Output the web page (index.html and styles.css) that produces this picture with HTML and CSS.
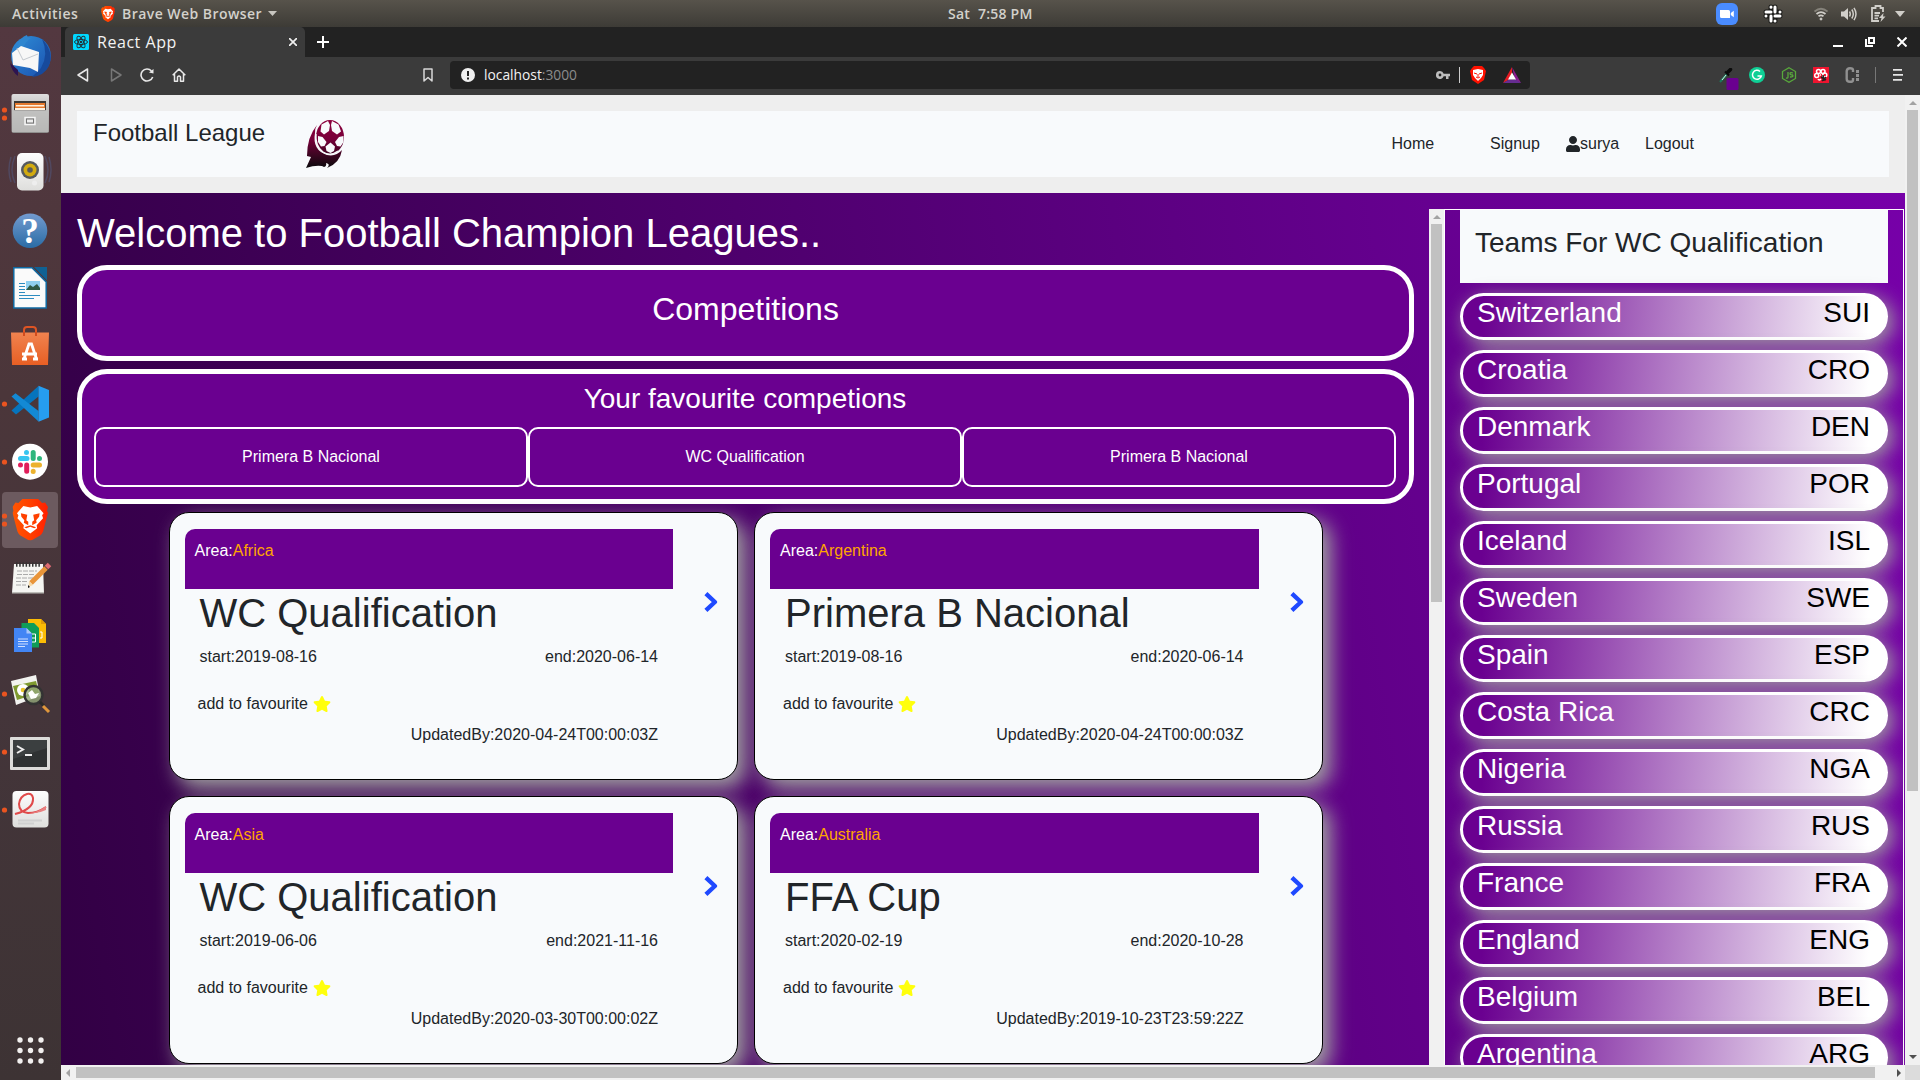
FILE: index.html
```html
<!DOCTYPE html>
<html lang="en">
<head>
<meta charset="utf-8">
<title>React App</title>
<link rel="stylesheet" href="styles.css">
</head>
<body>
<svg class="defs" aria-hidden="true">
  <defs>
    <linearGradient id="brave-g" x1="0" x2="1" y1="0" y2="0"><stop offset="0" stop-color="#ff5601"/><stop offset=".5" stop-color="#ff4000"/><stop offset="1" stop-color="#ff1f01"/></linearGradient>
    <linearGradient id="metal" x1="0" x2="0" y1="0" y2="1"><stop offset="0" stop-color="#dedede"/><stop offset="1" stop-color="#8e8e8c"/></linearGradient>
    <linearGradient id="paper" x1="0" x2="0" y1="0" y2="1"><stop offset="0" stop-color="#fdfdfd"/><stop offset="1" stop-color="#dededc"/></linearGradient>
    <linearGradient id="help-g" x1="0" x2="0" y1="0" y2="1"><stop offset="0" stop-color="#739bd0"/><stop offset="1" stop-color="#2a6ca5"/></linearGradient>
    <linearGradient id="bag-g" x1="0" x2="0" y1="0" y2="1"><stop offset="0" stop-color="#f0834f"/><stop offset="1" stop-color="#e85f24"/></linearGradient>
    <linearGradient id="bird-g" x1="0" x2="1" y1="0" y2="1"><stop offset="0" stop-color="#2f8fd8"/><stop offset="1" stop-color="#1a4fae"/></linearGradient>
    <linearGradient id="ball-g" gradientUnits="userSpaceOnUse" x1="0" x2="0" y1="0" y2="48"><stop offset="0" stop-color="#8c003c"/><stop offset=".4" stop-color="#78003a"/><stop offset="1" stop-color="#0a0a0c"/></linearGradient>
    <symbol id="lion" viewBox="0 0 36 42">
      <path fill="url(#brave-g)" d="M10 0h16l4 4 3-.5L36 8l-1 4 1 2-5 19q-1 2.500-3 4l-8 4.500q-2 1-4 0l-8-4.500q-2-1.500-3-4L0 14l1-2-1-4 3-4.500 3 .5z"/>
      <path fill="#fff" d="M11 7l7 1.500L25 7l6.500 7.500-1.500 2 1 3-6.500 7 .5 3-7 5.500-7-5.500.5-3L5 19.500l1-3-1.500-2z"/>
      <path fill="#ff4000" d="M8.500 14.500l6.500 1.500-1 5.500 2 1.500v3.500L11.500 24l.5-2.500-3-3.500zM27.500 14.500L21 16l1 5.500-2 1.500v3.500l4.500-2.500-.5-2.500 3-3.500zM12 28.500l6-2 6 2-2 1-4-1.500-4 1.500z"/>
    </symbol>
    <symbol id="star" viewBox="0 0 576 512"><path fill="#ffff0c" d="M259.300 17.800L194 150.200 47.900 171.500c-26.200 3.800-36.700 36.100-17.700 54.600l105.700 103-25 145.500c-4.500 26.300 23.200 46 46.400 33.700L288 439.600l130.700 68.700c23.200 12.200 50.900-7.400 46.400-33.700l-25-145.500 105.700-103c19-18.500 8.500-50.800-17.700-54.600L382 150.200 316.700 17.800c-11.700-23.600-45.600-23.900-57.400 0z"/></symbol>
    <symbol id="chevron" viewBox="0 0 14 20"><path fill="none" stroke="#1f49ff" stroke-width="4.400" stroke-linejoin="round" d="M1.900 1.700L10.900 10l-9 8.300"/></symbol>
  </defs>
</svg>

<header class="topbar">
  <span class="activities">Activities</span>
  <svg class="app-logo" width="14" height="16"><use href="#lion"/></svg>
  <span class="app-name">Brave Web Browser</span>
  <svg class="app-arrow" width="9" height="5" viewBox="0 0 9 5"><path fill="#c8c6c0" d="M0 0h9L4.500 5z"/></svg>
  <span class="clock">Sat&nbsp; 7:58 PM</span>
  <div class="tray">
    <svg width="22" height="22" viewBox="0 0 22 22"><rect width="22" height="22" rx="6" fill="#4a8cff"/><path fill="#fff" d="M4 7h8.500q1.500 0 1.500 1.500V15H5.500Q4 15 4 13.500zM14.800 10l3-2.200v6.400l-3-2.200z"/></svg>
    <svg class="tray-slack" width="20" height="20" viewBox="0 0 20 20"><g stroke="#1c1c1a" stroke-width="5" stroke-linecap="round"><path d="M8 3v5M3 8h5M12 12v5M12 12h5M12 3v5M3 12h5M8 12v5M12 8h5"/></g><g stroke="#fff" stroke-width="3" stroke-linecap="round"><path d="M3 8h5M12 3v5M12 12h5M8 12v5M8 3V3.200M3 12v.1M12 17v.1M17 8v.1"/></g></svg>
    <svg class="tray-wifi" width="14" height="14" viewBox="0 0 14 14" fill="none" stroke="#d0cec9" stroke-width="1.700"><path stroke="#85827a" d="M.5 4.500Q7-1 13.500 4.500"/><path d="M2.500 7Q7 3.200 11.500 7M4.500 9.300Q7 7.500 9.500 9.300"/><circle cx="7" cy="12" r="1" fill="#d0cec9" stroke-width="1"/></svg>
    <svg class="tray-vol" width="16" height="14" viewBox="0 0 16 14"><path fill="#d0cec9" d="M0 4.500h3L7 1v12L3 9.500H0z"/><path fill="none" stroke="#d0cec9" stroke-width="1.500" d="M8.500 4.500q1.500 2.500 0 5M10.800 2.500q3 4.500 0 9M13 .8q4 6.200 0 12.400"/></svg>
    <svg class="tray-bat" width="15" height="17" viewBox="0 0 15 17"><path fill="none" stroke="#d0cec9" stroke-width="1.800" d="M12 7V3H9.500V1h-5v2H1v13h7M3.500 8H9M3.500 10.700H8M3.500 13.300H7"/><path fill="#d0cec9" d="M12.500 8L8 13h2.500L9.500 17l5-5.500H12z"/></svg>
    <svg class="tray-arrow" width="10" height="6" viewBox="0 0 10 6"><path fill="#d0cec9" d="M0 0h10L5 6z"/></svg>
  </div>
</header>

<div class="desktop">
<aside class="dock">
  <svg viewBox="0 0 61 58"><circle cx="31" cy="29" r="20" fill="url(#bird-g)"/><path fill="#174a9c" d="M42 12q12 12 7 27-5 10-17 11l9-9q8-14 1-29z"/><path fill="#2e86d0" d="M17 20Q20 10 27 8q0 3 4 3-6 4-9 12z"/><path fill="#2d1450" d="M10 36l8 7v6q-6-4-8-13z"/><path fill="#f7f7f7" d="M12 26l9-7 18 6-1 20-8-4-17-3z"/><path fill="none" stroke="#c4c9cf" d="M17 21l6 12 15-6"/></svg>
  <svg viewBox="0 0 61 58"><circle class="pip" cx="4.500" cy="25" r="2.600"/><circle class="pip" cx="4.500" cy="33" r="2.600"/><rect x="11.500" y="9" width="37.500" height="39" rx="2" fill="url(#metal)"/><rect x="14" y="16" width="32" height="10" fill="#403a35"/><path fill="#e67a2e" d="M15 18h30v7H15z"/><path fill="#fff1df" d="M16 20h28v1.500H16zM15 23h30v2H15z"/><path fill="#c2c2c1" d="M12 25h36.500v22H12z" opacity=".8"/><rect x="25" y="32.500" width="10" height="7" fill="none" stroke="#f5f5f5" stroke-width="1.500"/><rect x="26.500" y="34" width="7" height="4" fill="#eee" stroke="#777"/></svg>
  <svg viewBox="0 0 61 58"><g fill="none" stroke="#52587c" stroke-width="1.500" opacity=".55"><path d="M15 13q-6 14 0 27M11 14q-4 13 0 25M45 13q6 14 0 27M49 14q4 13 0 25"/></g><rect x="17" y="10" width="26.500" height="37.500" rx="5" fill="url(#paper)"/><circle cx="30" cy="27" r="9" fill="#555a60"/><circle cx="30" cy="27" r="6.500" fill="#d2ab10"/><circle cx="30" cy="27" r="2.800" fill="#5b5b56"/><circle cx="34.500" cy="40" r="2.500" fill="#eee"/></svg>
  <svg viewBox="0 0 61 58"><circle cx="30" cy="29.700" r="17.300" fill="url(#help-g)"/><text x="30" y="41.500" class="help-mark">?</text></svg>
  <svg viewBox="0 0 61 58"><path fill="#fafafa" stroke="#0f6aa3" stroke-width="1.500" d="M13.800 8.800H32L46.200 23v26H13.800z"/><path fill="#0f6194" d="M34 8h13v13.500z"/><path stroke="#2c8cc0" d="M19 24.500h6M19 27.500h6M19 30.500h6M19 33.500h6M19 36.500h21M19 39.500h15"/><path fill="#8fd0f0" d="M26 22h14v9H26z"/><path fill="#2f5a46" d="M26 31l4-5 3 2 4-3 3 4v2z"/></svg>
  <svg viewBox="0 0 61 58"><path fill="none" stroke="#dd5424" stroke-width="2" d="M24 20v-7q0-3 3-3h6q3 0 3 3v7"/><path fill="url(#bag-g)" d="M11 15.500h38L48 48H12z"/><path fill="none" stroke="#d14b1d" stroke-width="2" d="M24 15v4M36 15v4"/><path fill="none" stroke="#fff" stroke-width="2.800" d="M24 42l5-15h2.500l5 15M22 37h15M22 42h5M33 42h5"/></svg>
  <svg viewBox="0 0 61 58"><circle class="pip" cx="4.500" cy="29" r="2.600"/><path fill="#0674bd" d="M38.500 11v10.500L16 39.500l-4.500-4z"/><path fill="#1389d4" d="M11.500 21.500l4-3.200 23 17.800V46.500z"/><path fill="#269df0" d="M38.500 10.700L49 15v27.500l-10.500 4.200z"/></svg>
  <svg viewBox="0 0 61 58"><circle class="pip" cx="4.500" cy="29" r="2.600"/><circle cx="30" cy="28.700" r="18" fill="#fff"/><g stroke-width="5" stroke-linecap="round"><path stroke="#36c5f0" d="M20.500 25.500H27M26.500 19.500v.1"/><path stroke="#2eb67d" d="M33.200 19.500v6M39.500 25.500v.1"/><path stroke="#ecb22e" d="M33.200 32H39.500M33.200 38.300v.1"/><path stroke="#e01e5a" d="M26.700 32v6.300M20.500 32v.1"/></g></svg>
  <svg viewBox="0 0 61 58"><rect x="2" y="1" width="56" height="56" rx="4" fill="#6c5a5f"/><circle class="pip" cx="4.500" cy="25" r="2.600"/><circle class="pip" cx="4.500" cy="33" r="2.600"/><use href="#lion" x="12.500" y="8" width="35.500" height="41.500"/></svg>
  <svg viewBox="0 0 61 58"><path fill="#f5f5f2" d="M14 15h29l1 29H12z"/><path fill="#bdbdb8" d="M12 43h32v1.500H12z"/><path stroke="#333" stroke-width="4.500" stroke-dasharray="1.500 1.700" d="M16 15.500h24"/><path stroke="#aaa" stroke-dasharray="5 1" d="M17 22h20M17 25.500h18M16 29h18M16 32.500h12M16 36h10"/><path stroke="#e9953a" stroke-width="5" d="M31 34l15-15"/><path stroke="#e06a72" stroke-width="5" d="M46.500 18.500l3-3"/><path fill="#f5d9a8" d="M29 32l4 4-4.500 2z"/><path fill="#111" d="M28 36l2 2-2 1z"/></svg>
  <svg viewBox="0 0 61 58"><path fill="#fbbc05" d="M28 12h13l5 5v19H28z"/><path fill="#e09b06" d="M41 12l5 5h-5z"/><path fill="#0f9d58" d="M21.500 16H34l5 5v19.500H21.500z"/><path fill="none" stroke="#fff" d="M32 27h3.500v8H32M32 31h3.500M40 25h2v6h-2"/><path fill="#4285f4" d="M14 21h12.500l5.500 5.500V45H14z"/><path fill="#a9c7fa" d="M26.500 21l5.500 5.500h-5.500z"/><path stroke="#cfe0ff" stroke-width="1.200" d="M18 32h10M18 34.500h10M18 37h10M18 39.500h7"/></svg>
  <svg viewBox="0 0 61 58"><circle class="pip" cx="4.500" cy="29" r="2.600"/><path fill="#f3f3f0" d="M11 16l25-6 4 21-24 9z"/><path fill="#7f9a2f" d="M13 21l23-5 3 12-22 7z"/><circle cx="23" cy="25" r="6" fill="#fff"/><circle cx="23" cy="25" r="2.300" fill="#e8c42c"/><circle cx="33.500" cy="30" r="9" fill="#93a77a" fill-opacity=".8" stroke="#333" stroke-width="2.500"/><path fill="#fff" d="M28 28l4-3 3 4 4-1-3 5-5 1z"/><path stroke="#2a2a2a" stroke-width="3" d="M40 37l4 4"/><path stroke="#e0973c" stroke-width="3" d="M43 41l6 6"/></svg>
  <svg viewBox="0 0 61 58"><circle class="pip" cx="4.500" cy="29" r="2.600"/><rect x="10" y="14" width="40" height="33" rx="1" fill="#dcdcda"/><rect x="13" y="17" width="34" height="27" fill="#2f3233"/><path fill="#44484a" d="M13 17h34v8L13 36z" opacity=".6"/><path fill="none" stroke="#eee" stroke-width="2" d="M17 23l6 3.500-6 3.500M25 32h7"/></svg>
  <svg viewBox="0 0 61 58"><circle class="pip" cx="4.500" cy="29" r="2.600"/><rect x="12.500" y="10" width="36" height="36.500" rx="4" fill="url(#paper)"/><path fill="none" stroke="#e04a4a" stroke-width="2" d="M15 33Q34 28 33 17q-1-5-6-4-7 2-8 10 0 8 9 9 9 0 18-6"/><path fill="#e88080" d="M30 32q8-1 16-7v4q-8 4-16 3z"/><path stroke="#d0d0d0" stroke-width="2" d="M18 39.500h24M18 42.500h16"/></svg>
  <svg class="apps" width="27" height="27" viewBox="0 0 27 27" fill="#f2f0ef"><circle cx="3" cy="3" r="2.700"/><circle cx="13.500" cy="3" r="2.700"/><circle cx="24" cy="3" r="2.700"/><circle cx="3" cy="13.500" r="2.700"/><circle cx="13.500" cy="13.500" r="2.700"/><circle cx="24" cy="13.500" r="2.700"/><circle cx="3" cy="24" r="2.700"/><circle cx="13.500" cy="24" r="2.700"/><circle cx="24" cy="24" r="2.700"/></svg>
</aside>

<div class="browser">
  <div class="tabstrip">
    <div class="tab">
      <svg width="16" height="16" viewBox="0 0 16 16"><rect width="16" height="16" rx="1.500" fill="#00d8ff"/><g fill="none" stroke="#20323a"><ellipse cx="8" cy="8" rx="6.500" ry="2.500"/><ellipse cx="8" cy="8" rx="6.500" ry="2.500" transform="rotate(60 8 8)"/><ellipse cx="8" cy="8" rx="6.500" ry="2.500" transform="rotate(120 8 8)"/></g><circle cx="8" cy="8" r="1.300" fill="#20323a"/></svg>
      <span class="tab-title">React App</span>
      <svg class="tab-close" width="8" height="8" viewBox="0 0 8 8" stroke="#f0f0f0" stroke-width="1.700"><path d="M0 0l8 8M8 0L0 8"/></svg>
    </div>
    <svg class="tab-new" width="12" height="12" viewBox="0 0 12 12" stroke="#fff" stroke-width="2"><path d="M6 0v12M0 6h12"/></svg>
    <div class="win-buttons">
      <svg width="10" height="10" viewBox="0 0 10 10"><path fill="#fff" d="M0 8h10v2H0z"/></svg>
      <svg width="10" height="10" viewBox="0 0 10 10" fill="none" stroke="#fff" stroke-width="2"><path d="M4 1h5v5H4zM1 2v7h7"/></svg>
      <svg width="10" height="10" viewBox="0 0 10 10" stroke="#fff" stroke-width="2"><path d="M.5.5l9 9M9.500.5l-9 9"/></svg>
    </div>
  </div>

  <div class="toolbar">
    <svg class="ic-back" width="12" height="14" viewBox="0 0 12 14" fill="none" stroke="#e8e8e8" stroke-width="1.500" stroke-linejoin="round"><path d="M10.500 1v12L1 7z"/></svg>
    <svg class="ic-fwd" width="12" height="14" viewBox="0 0 12 14" fill="none" stroke="#777" stroke-width="1.500" stroke-linejoin="round"><path d="M1.500 1v12L11 7z"/></svg>
    <svg class="ic-reload" width="14" height="14" viewBox="0 0 14 14" fill="none" stroke="#e8e8e8" stroke-width="1.600"><path d="M11.500 3A6 6 0 1 0 12.700 9"/><path fill="#e8e8e8" stroke="none" d="M9 4.500L13.500 1v4.500z"/></svg>
    <svg class="ic-home" width="14" height="14" viewBox="0 0 14 14" fill="none" stroke="#e8e8e8" stroke-width="1.500" stroke-linejoin="round"><path d="M.7 7.300L7 1l6.300 6.300M2.500 6v7.200h3V9q1.500-2 3 0v4.200h3V6"/></svg>
    <svg class="ic-mark" width="10" height="14" viewBox="0 0 10 14" fill="none" stroke="#d8d8d8" stroke-width="1.500" stroke-linejoin="round"><path d="M1 1h8v12L5 9.500 1 13z"/></svg>
    <div class="urlbar">
      <svg width="14" height="14" viewBox="0 0 14 14"><circle cx="7" cy="7" r="7" fill="#efefef"/><path fill="#222" d="M6 3h2v5H6zM6 9.500h2v2H6z"/></svg>
      <span class="url">localhost<span class="port">:3000</span></span>
      <svg class="ic-key" width="14" height="8" viewBox="0 0 14 8"><path fill="#bdbdbd" fill-rule="evenodd" d="M4 0a4 4 0 1 0 3.700 5.300H10V8h2.500V5.300H14V2.700H7.700A4 4 0 0 0 4 0zm0 2.600a1.400 1.400 0 1 1 0 2.800 1.400 1.400 0 0 1 0-2.800z"/></svg>
      <span class="url-sep"></span>
      <svg class="ic-shield" width="16" height="18" viewBox="0 0 16 18"><path fill="#f10" d="M4 0h8l2 2 2 3-2 9-6 4-6-4L0 5l2-3z"/><path fill="#fff" d="M3 4l5-1 5 1v5l-2 3-3 3-3-3-2-3z"/><path stroke="#f10" fill="none" d="M4 7l3 1M12 7L9 8M8 8v3M6 11l2 1 2-1"/></svg>
      <svg class="ic-bat" width="18" height="16" viewBox="0 0 18 16"><path fill="#e51b23" d="M9 0L0 16l9-5z"/><path fill="#8a1b8f" d="M9 0l9 16-6-3z"/><path fill="#662d91" d="M0 16h18l-5-3.500H6z"/><path fill="#fff" d="M9 5.500l4 7H5z"/></svg>
    </div>
    <div class="extensions">
      <svg width="20" height="22" viewBox="0 0 20 22"><path stroke="#1b7a5c" stroke-width="2" d="M1 14l7-8"/><path stroke="#d8f5e8" d="M3 12l4-5"/><path stroke="#0b0b0b" stroke-width="3.500" stroke-linecap="round" d="M9 4l2.500-2.500"/><path stroke="#0b0b0b" stroke-width="2" d="M6 3.500l4 4"/><rect x="7.500" y="10" width="12" height="12" rx="1.500" fill="#6a0090"/></svg>
      <svg class="ext-g" width="16" height="16" viewBox="0 0 16 16"><circle cx="8" cy="8" r="8" fill="#0fcf95"/><path fill="none" stroke="#fff" stroke-width="1.500" d="M11 4.500A4.500 4.500 0 1 0 12.300 9H8.500"/></svg>
      <svg class="ext-n" width="16" height="16" viewBox="0 0 16 16" fill="none" stroke="#58a83c" stroke-width="1.300"><path d="M8 .7l6.500 3.800v7L8 15.300 1.500 11.500v-7zM7 5v5q0 1.500-2 1M12 6q-3-1-3 .5T11.500 8q1.500 2-2.500 2"/></svg>
      <svg class="ext-r" width="16" height="16" viewBox="0 0 16 16"><rect width="16" height="16" fill="#f0142f"/><g fill="none" stroke="#fff" stroke-width="1.500"><circle cx="5.500" cy="4.500" r="2"/><circle cx="10" cy="4.500" r="2"/><circle cx="3.700" cy="8.500" r="2"/><circle cx="11.800" cy="8" r="2"/><path d="M5 12q1 2 3 0M7 8h1"/></g><path stroke="#222" stroke-width="1.500" d="M8 10l5 3M10 8l1 6M13 10l-4 4"/></svg>
      <svg class="ext-c" width="15" height="16" viewBox="0 0 15 16"><path fill="none" stroke="#909090" stroke-width="2.400" d="M8 5V3Q8 1.200 5 1.200T1.700 4v8q0 2.800 3.300 2.800T8 13v-2"/><path fill="#909090" d="M11 3h3v3h-3zM11 7h3v3h-3zM11 11h3v3h-3z"/></svg>
      <span class="ext-sep"></span>
      <svg class="ext-m" width="10" height="12" viewBox="0 0 10 12"><path fill="#e6e6e6" d="M0 0h9v1.800H0zM0 5h10v1.800H0zM0 10h9v1.800H0z"/></svg>
    </div>
  </div>

  <div class="viewport">
    <div class="page">
      <nav class="site-nav">
        <div class="nav-inner">
          <h1 class="brand">Football League</h1>
          <svg class="brand-logo" width="38" height="49" viewBox="0 0 38 49">
            <path fill="url(#ball-g)" d="M11 5Q1 17 1 36l4 1-5 11q9-3 16-2l2 1q3-1 2-4 5 1 1 5 13-5 15-18-6 7-15 5Q6 30 9 13q0-5 2-8z"/>
            <ellipse cx="24" cy="17" rx="14" ry="17" fill="url(#ball-g)"/>
            <g fill="#f8fafc"><path d="M15.500 4.500L22 1l2 4-1 6-5 3.500-3.500-3zM32.500 4.500L26 1l-1 4 1 6 5 3.500 4-3zM12 16l4.500 1 4 5-2 4-3.500.5-3-4.500zM37.500 16l-4.500 1-4 5 2 4 3.500.5 3-4.500zM24.500 22.500l4.500 4-1 4.500-3.500 2-4-2-1-4.500z"/></g>
            <path fill="none" stroke="#f8fafc" stroke-width="1.300" d="M10 14q-1 12 7 18 7 5 15-1"/>
          </svg>
          <a class="link-home">Home</a>
          <a class="link-signup">Signup</a>
          <a class="link-user"><svg width="14" height="16" viewBox="0 0 448 512"><path fill="#212529" d="M224 256c70.700 0 128-57.300 128-128S294.700 0 224 0 96 57.300 96 128s57.300 128 128 128zm89.600 32h-16.700c-22.200 10.200-46.900 16-72.900 16s-50.600-5.800-72.900-16h-16.700C60.200 288 0 348.200 0 422.400V464c0 26.500 21.500 48 48 48h352c26.500 0 48-21.500 48-48v-41.600c0-74.200-60.200-134.400-134.400-134.400z"/></svg>surya</a>
          <a class="link-logout">Logout</a>
        </div>
      </nav>

      <div class="columns">
        <main class="main">
          <h1 class="welcome">Welcome to Football Champion Leagues..</h1>
          <section class="banner">Competitions</section>
          <section class="favourites">
            <h3>Your favourite competions</h3>
            <div class="fav-row">
              <div class="fav">Primera B Nacional</div>
              <div class="fav">WC Qualification</div>
              <div class="fav">Primera B Nacional</div>
            </div>
          </section>
          <section class="cards">
            <article class="card">
              <div class="card-body">
                <div class="area">Area:<span>Africa</span></div>
                <h2>WC Qualification</h2>
                <div class="dates"><span>start:2019-08-16</span><span>end:2020-06-14</span></div>
                <div class="add">add to favourite <svg width="18" height="16"><use href="#star"/></svg></div>
                <div class="updated">UpdatedBy:2020-04-24T00:00:03Z</div>
              </div>
              <svg class="go" width="14" height="20"><use href="#chevron"/></svg>
            </article>
            <article class="card">
              <div class="card-body">
                <div class="area">Area:<span>Argentina</span></div>
                <h2>Primera B Nacional</h2>
                <div class="dates"><span>start:2019-08-16</span><span>end:2020-06-14</span></div>
                <div class="add">add to favourite <svg width="18" height="16"><use href="#star"/></svg></div>
                <div class="updated">UpdatedBy:2020-04-24T00:00:03Z</div>
              </div>
              <svg class="go" width="14" height="20"><use href="#chevron"/></svg>
            </article>
            <article class="card">
              <div class="card-body">
                <div class="area">Area:<span>Asia</span></div>
                <h2>WC Qualification</h2>
                <div class="dates"><span>start:2019-06-06</span><span>end:2021-11-16</span></div>
                <div class="add">add to favourite <svg width="18" height="16"><use href="#star"/></svg></div>
                <div class="updated">UpdatedBy:2020-03-30T00:00:02Z</div>
              </div>
              <svg class="go" width="14" height="20"><use href="#chevron"/></svg>
            </article>
            <article class="card">
              <div class="card-body">
                <div class="area">Area:<span>Australia</span></div>
                <h2>FFA Cup</h2>
                <div class="dates"><span>start:2020-02-19</span><span>end:2020-10-28</span></div>
                <div class="add">add to favourite <svg width="18" height="16"><use href="#star"/></svg></div>
                <div class="updated">UpdatedBy:2019-10-23T23:59:22Z</div>
              </div>
              <svg class="go" width="14" height="20"><use href="#chevron"/></svg>
            </article>
          </section>
        </main>

        <div class="vscroll inner"><i class="arrow up"></i><i class="thumb"></i></div>

        <aside class="teams">
          <h3>Teams For WC Qualification</h3>
          <div class="team"><span>Switzerland</span><b>SUI</b></div>
          <div class="team"><span>Croatia</span><b>CRO</b></div>
          <div class="team"><span>Denmark</span><b>DEN</b></div>
          <div class="team"><span>Portugal</span><b>POR</b></div>
          <div class="team"><span>Iceland</span><b>ISL</b></div>
          <div class="team"><span>Sweden</span><b>SWE</b></div>
          <div class="team"><span>Spain</span><b>ESP</b></div>
          <div class="team"><span>Costa Rica</span><b>CRC</b></div>
          <div class="team"><span>Nigeria</span><b>NGA</b></div>
          <div class="team"><span>Russia</span><b>RUS</b></div>
          <div class="team"><span>France</span><b>FRA</b></div>
          <div class="team"><span>England</span><b>ENG</b></div>
          <div class="team"><span>Belgium</span><b>BEL</b></div>
          <div class="team"><span>Argentina</span><b>ARG</b></div>
        </aside>
      </div>
    </div>
    <div class="vscroll outer"><i class="arrow up"></i><i class="thumb"></i><i class="arrow down"></i></div>
  </div>

  <div class="hscroll"><i class="arrow left"></i><i class="thumb"></i><i class="arrow right"></i><i class="corner"></i></div>
</div>
</div>
</body>
</html>
```
FILE: styles.css
```css
* { box-sizing: border-box; }
body { margin: 0; width: 1920px; height: 1080px; overflow: hidden; display: flex; flex-direction: column; font-family: "Liberation Sans", Arial, sans-serif; font-size: 16px; line-height: 24px; color: #212529; white-space: nowrap; }
h1, h2, h3 { margin: 0; font-weight: 400; line-height: 1.2; }
svg { display: block; flex: none; }
.defs { position: absolute; width: 0; height: 0; }

/* desktop top bar */
.topbar { height: 27px; flex: none; display: flex; align-items: center; background: linear-gradient(#57534b, #3d3b36); color: #d3d1cb; font: 600 14px/27px "Open Sans", "Noto Sans", sans-serif; }
.activities { margin-left: 12px; width: 89px; letter-spacing: .5px; }
.app-name { margin-left: 7px; width: 146px; letter-spacing: .45px; }
.clock { margin-left: 671px; letter-spacing: .25px; }
.tray { margin-left: auto; margin-right: 15px; display: flex; align-items: center; }
.tray-slack { margin-left: 25px; }
.tray-wifi { margin-left: 31px; }
.tray-vol { margin-left: 13px; }
.tray-bat { margin-left: 14px; }
.tray-arrow { margin-left: 9px; }

.desktop { flex: 1; min-height: 0; display: flex; }
.dock { width: 61px; flex: none; display: flex; flex-direction: column; background: linear-gradient(#533840, #4b363a 35%, #44353a 65%, #3d3334); }
.dock svg { width: 61px; height: 58px; }
.dock .apps { width: 27px; height: 27px; margin: auto 0 16px 17px; }
.pip { fill: #ea5420; }
.help-mark { font: 700 35px "Liberation Serif", serif; fill: #fff; text-anchor: middle; }

/* browser chrome */
.browser { flex: 1; min-width: 0; display: flex; flex-direction: column; }
.tabstrip { height: 30px; flex: none; display: flex; align-items: center; background: #222; padding-left: 4px; }
.tab { width: 240px; height: 30px; display: flex; align-items: center; padding: 0 8px; background: #3b3b3b; border-radius: 5px 5px 0 0; }
.tab-title { margin-left: 8px; font: 16px/30px "Open Sans", "Noto Sans", sans-serif; color: #f3f3f3; letter-spacing: .55px; }
.tab-close { margin-left: auto; }
.tab-new { margin-left: 12px; }
.win-buttons { margin-left: auto; margin-right: 13px; display: flex; gap: 22px; }
.win-buttons svg:first-child { margin-right: 0; }
.toolbar { height: 38px; flex: none; display: flex; align-items: center; background: #3b3b3b; padding-bottom: 2px; }
.ic-back { margin-left: 16px; }
.ic-fwd { margin-left: 21px; }
.ic-reload { margin-left: 18px; }
.ic-home { margin-left: 18px; }
.ic-mark { margin-left: 237px; }
.urlbar { margin-left: 17px; width: 1080px; height: 28px; display: flex; align-items: center; border-radius: 4px; background: #222; padding: 0 9px 0 11px; }
.url { margin-left: 9px; margin-right: auto; font: 13.8px/28px "Open Sans", "Noto Sans", sans-serif; color: #f2f2f2; }
.port { color: #8c8c8c; }
.url-sep { width: 1px; height: 16px; margin: 0 10px 0 9px; background: #ccc; }
.ic-bat { margin-left: 17px; }
.extensions { margin-left: auto; margin-right: 17px; display: flex; align-items: center; }
.extensions > :first-child { margin-top: 7px; }
.ext-g { margin-left: 10px; }
.ext-n, .ext-r { margin-left: 16px; }
.ext-c { margin-left: 16px; }
.ext-sep { width: 1px; height: 16px; margin: 0 17px 0 15px; background: #777; }

/* page */
.viewport { flex: 1; min-height: 0; display: flex; overflow: hidden; }
.page { flex: 1; min-width: 0; display: flex; flex-direction: column; background: linear-gradient(81deg, #320044, #7700a9); }
.site-nav { height: 98px; flex: none; padding: 16px; background: #eee; }
.nav-inner { height: 66px; display: flex; align-items: center; padding-left: 16px; background: #f8fafc; }
.brand { align-self: flex-start; margin-top: 8px; width: 213px; font-size: 24px; }
.link-home { margin-left: 1047.5px; width: 98.5px; }
.link-signup { width: 76px; }
.link-user { display: flex; align-items: center; width: 79px; }
.columns { flex: 1; min-height: 0; display: flex; padding: 16px 1px 0 16px; overflow: hidden; }
.main { width: 1337px; flex: none; }
.welcome { font-size: 40px; color: #fff; margin-bottom: 8px; }
.banner, .favourites { border: 5px solid #fff; border-radius: 30px; background: #6a0090; color: #fff; text-align: center; }
.banner { height: 96px; font-size: 32px; line-height: 78px; }
.favourites { height: 135px; margin-top: 8px; padding: 7px 13px 7px 12px; }
.favourites h3 { font-size: 28px; height: 46px; line-height: 36px; }
.fav-row { display: flex; }
.fav { flex: 1; height: 60px; border: 2px solid #fff; border-radius: 10px; line-height: 56px; }
.cards { margin: 8px 91px 0 91.5px; display: grid; grid-template-columns: 1fr 1fr; gap: 16px 16.5px; }
.card { height: 268px; display: flex; align-items: flex-start; padding: 16px 0 0 15px; border: 1px solid #000; border-radius: 20px; background: #f8fafc; box-shadow: 8px 8px 20px #a2a2a2; }
.card-body { width: 488.5px; }
.area { height: 60px; padding: 10px; border-top-left-radius: 10px; background: #6a0090; color: #fff; }
.area span { color: #ffa500; }
.card h2 { padding-left: 15px; font-size: 40px; }
.dates { display: flex; justify-content: space-between; padding: 8px 15px 0; }
.add { display: flex; align-items: center; gap: 5px; padding-left: 13px; margin-top: 23px; }
.add svg { margin-top: -1px; }
.updated { margin-top: 7px; padding-right: 15px; text-align: right; }
.go { margin: 63px 0 0 31px; }

.teams { flex: 1; min-width: 0; height: 900px; padding: 0 15px; border: 1px solid #fff; }
.teams h3 { height: 73px; padding: 16px 15px; font-size: 28px; background: #f8fafc; }
.team { height: 47px; margin-top: 10px; padding: 0 15px 0 14px; display: flex; justify-content: space-between; border: 3px solid #fff; border-radius: 25px; background: linear-gradient(95deg, #6a0090 5%, #fff 96%); box-shadow: 5px 5px 20px #a2a2a2; font-size: 28px; line-height: 33px; color: #fff; }
.team b { font-weight: 400; color: #000; }

/* scrollbars */
.vscroll { width: 15px; flex: none; display: flex; flex-direction: column; align-items: center; background: #f1f1f1; }
.inner { margin-left: 15px; }
.thumb { background: #c1c1c1; }
.inner .thumb { width: 11px; height: 378px; }
.outer .thumb { width: 11px; height: 681px; }
.arrow { flex: none; width: 0; height: 0; border: 4px solid transparent; }
.up { border-bottom-color: #a3a3a3; border-top: 0; margin: 6px 0 5px; }
.down { border-top-color: #505050; border-bottom: 0; margin-top: auto; margin-bottom: 6px; }
.hscroll { height: 15px; flex: none; display: flex; align-items: center; background: #f1f1f1; }
.hscroll .thumb { width: 1799px; height: 11px; }
.left { border-right-color: #a3a3a3; border-left: 0; margin: 0 6px 0 5px; }
.right { border-left-color: #505050; border-right: 0; margin-left: auto; margin-right: 4px; }
.corner { width: 15px; height: 15px; background: #dcdcdc; }
```
